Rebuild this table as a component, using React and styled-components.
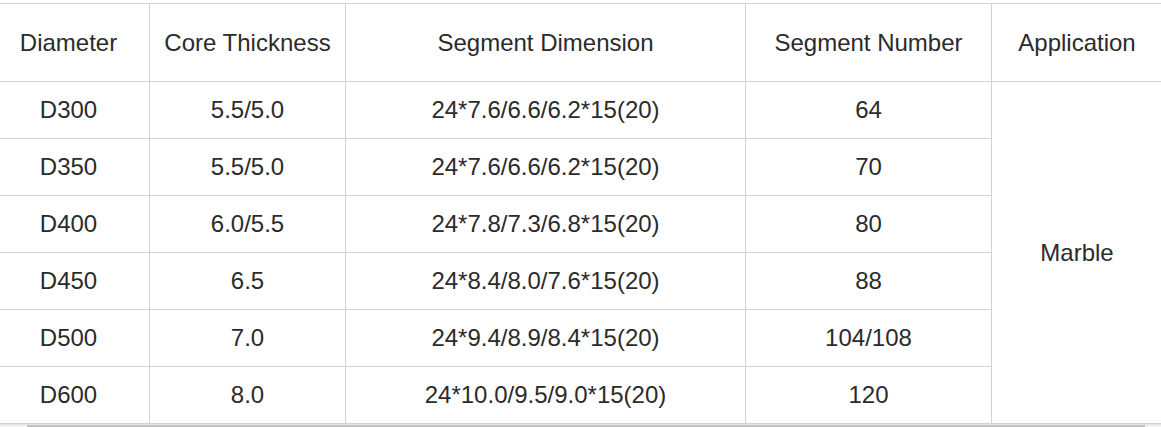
import React from "react"
import styled, { createGlobalStyle } from "styled-components"

const Global = createGlobalStyle`
  html, body {
    margin: 0;
    padding: 0;
    background: #fff;
  }
  body {
    font-family: "Liberation Sans", Arial, sans-serif;
    color: #2b2b2b;
  }
`

const Wrap = styled.div`
  width: 1161px;
  overflow: hidden;
  padding-top: 3px;
  box-sizing: border-box;
`

const Table = styled.table`
  width: 1175px;
  min-width: 1175px;
  border-collapse: collapse;
  margin-left: -13px;
  table-layout: fixed;
  font-size: 24px;
  color: #2b2b2b;
`

const Th = styled.th`
  font-weight: normal;
  height: 77px;
  padding: 0;
  border: 1px solid #d2d2d2;
  text-align: center;
  vertical-align: middle;
`

const Td = styled.td`
  height: 56px;
  padding: 0;
  border: 1px solid #d2d2d2;
  text-align: center;
  vertical-align: middle;
`

const Track = styled.div`
  height: 4px;
  background: #f1f1f1;
  border-top: 1px solid #e4e4e4;
  padding-left: 27px;
  box-sizing: border-box;
`

const Thumb = styled.div`
  width: 1118px;
  height: 3px;
  background: #c1c1c1;
`

const cols = [162, 196, 400, 246, 171]
const heads = ["Diameter", "Core Thickness", "Segment Dimension", "Segment Number", "Application"]

const rows = [
  ["D300", "5.5/5.0", "24*7.6/6.6/6.2*15(20)", "64"],
  ["D350", "5.5/5.0", "24*7.6/6.6/6.2*15(20)", "70"],
  ["D400", "6.0/5.5", "24*7.8/7.3/6.8*15(20)", "80"],
  ["D450", "6.5", "24*8.4/8.0/7.6*15(20)", "88"],
  ["D500", "7.0", "24*9.4/8.9/8.4*15(20)", "104/108"],
  ["D600", "8.0", "24*10.0/9.5/9.0*15(20)", "120"],
]

export default () => (
  <>
    <Global />
    <Wrap>
      <Table>
        <colgroup>
          {cols.map((w, i) => (
            <col key={i} style={{ width: w }} />
          ))}
        </colgroup>
        <thead>
          <tr>
            {heads.map((h) => (
              <Th key={h}>{h}</Th>
            ))}
          </tr>
        </thead>
        <tbody>
          {rows.map((r, i) => (
            <tr key={r[0]}>
              {r.map((c, j) => (
                <Td key={j}>{c}</Td>
              ))}
              {i === 0 ? <Td rowSpan={6}>Marble</Td> : null}
            </tr>
          ))}
        </tbody>
      </Table>
      <Track>
        <Thumb />
      </Track>
    </Wrap>
  </>
)
